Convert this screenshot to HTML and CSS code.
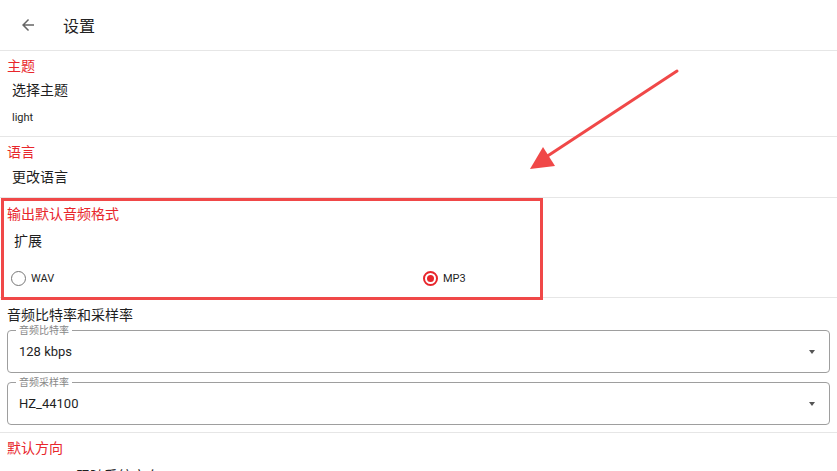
FILE: index.html
```html
<!DOCTYPE html>
<html lang="zh">

<head>
    <meta charset="UTF-8">
    <meta name="viewport" content="width=device-width, initial-scale=1.0">
    <title>设置</title>
    <link rel="stylesheet" href="styles.css">
</head>

<body>

    <header class="app-bar">
        <span class="back-btn">
            <svg width="18" height="18" viewBox="0 0 24 24">
                <path d="M20 11H7.83l5.59-5.59L12 4l-8 8 8 8 1.41-1.41L7.83 13H20v-2z" fill="#666"/>
            </svg>
        </span>
        <h1>设置</h1>
    </header>

    <section class="section">
        <div class="section-title">主题</div>
        <div class="item-title">选择主题</div>
        <div class="item-sub">light</div>
    </section>

    <section class="section">
        <div class="section-title">语言</div>
        <div class="item-title item-lang">更改语言</div>
    </section>

    <section class="section section-format">
        <div class="section-title">输出默认音频格式</div>
        <div class="item-title item-ext">扩展</div>
        <div class="radio-row">
            <label class="radio">
                <span class="radio-dot"></span>
                <span>WAV</span>
            </label>
            <label class="radio checked">
                <span class="radio-dot"></span>
                <span>MP3</span>
            </label>
        </div>
        <div class="mark-box"></div>
    </section>

    <section class="section section-rate">
        <div class="section-title plain">音频比特率和采样率</div>
        <div class="select-field">
            <span class="select-label">音频比特率</span>
            <span class="select-value">128 kbps</span>
            <span class="select-caret"></span>
        </div>
        <div class="select-field">
            <span class="select-label">音频采样率</span>
            <span class="select-value">HZ_44100</span>
            <span class="select-caret"></span>
        </div>
    </section>

    <section class="section last">
        <div class="section-title">默认方向</div>
        <div class="item-title item-orient">跟随系统方向</div>
    </section>

    <!-- annotation arrow -->
    <svg class="mark-arrow" width="837" height="471" viewBox="0 0 837 471">
        <line x1="677" y1="71" x2="546" y2="157" stroke="#f04848" stroke-width="3" stroke-linecap="round"/>
        <polygon points="530,169 543,147 555,166" fill="#f04848"/>
    </svg>

</body>

</html>
```

FILE: styles.css
```css
body {
    font-family: Roboto, "Noto Sans CJK SC", sans-serif;
    margin: 0;
    background-color: #fff;
    color: #1f1f1f;
    position: relative;
    height: 471px;
    overflow: hidden;
}

.app-bar {
    display: flex;
    align-items: center;
    height: 50px;
    border-bottom: 1px solid #e6e6e6;
}

.back-btn {
    display: flex;
    margin-left: 19px;
    width: 18px;
    height: 18px;
}

.app-bar h1 {
    margin: 0 0 0 26px;
    font-size: 16px;
    font-weight: normal;
    color: #222;
}

.section {
    padding: 5px 0 10px 7px;
    border-bottom: 1px solid #e6e6e6;
}

.section-title {
    font-size: 14px;
    line-height: 20px;
    color: #e8262c;
}

.section-title.plain {
    color: #1f1f1f;
}

.item-title {
    margin: 4px 0 0 5px;
    font-size: 14px;
    line-height: 20px;
}

.item-lang {
    margin-top: 5px;
}

.item-sub {
    margin: 9px 0 0 5px;
    font-size: 11px;
    line-height: 17px;
}

/* audio format */
.section-format {
    position: relative;
    padding-top: 6px;
    padding-bottom: 7px;
}

.item-ext {
    margin: 7px 0 0 7px;
}

.radio-row {
    display: flex;
    margin: 15px 0 0 4px;
    padding-right: 2px;
    height: 24px;
}

.radio {
    flex: 1;
    display: flex;
    align-items: center;
    gap: 5px;
    font-size: 11px;
}

.radio-dot {
    box-sizing: border-box;
    width: 15px;
    height: 15px;
    border: 1.5px solid #777;
    border-radius: 50%;
    display: flex;
    align-items: center;
    justify-content: center;
}

.radio.checked .radio-dot {
    border: 2px solid #e8262c;
}

.radio.checked .radio-dot::after {
    content: "";
    width: 7px;
    height: 7px;
    border-radius: 50%;
    background-color: #e8262c;
}

.mark-box {
    position: absolute;
    left: 1px;
    top: 0;
    width: 542px;
    height: 102px;
    box-sizing: border-box;
    border: 3px solid #f04848;
}

/* selects */
.section-rate {
    padding: 7px 7px 7px 7px;
}

.select-field {
    position: relative;
    display: flex;
    align-items: center;
    justify-content: space-between;
    height: 43px;
    box-sizing: border-box;
    margin-top: 5px;
    padding: 0 14px 0 11px;
    border: 1px solid #9e9e9e;
    border-radius: 4px;
}

.select-field + .select-field {
    margin-top: 9px;
}

.select-label {
    position: absolute;
    left: 8px;
    top: -6px;
    padding: 0 3px;
    background-color: #fff;
    font-size: 10px;
    line-height: 11px;
    color: #888;
}

.select-value {
    font-size: 13px;
}

.select-caret {
    width: 0;
    height: 0;
    border-left: 3.5px solid transparent;
    border-right: 3.5px solid transparent;
    border-top: 4px solid #555;
}

.last {
    border-bottom: none;
}

.item-orient {
    margin: 8px 0 0 69px;
}

.mark-arrow {
    position: absolute;
    left: 0;
    top: 0;
    pointer-events: none;
}
```
